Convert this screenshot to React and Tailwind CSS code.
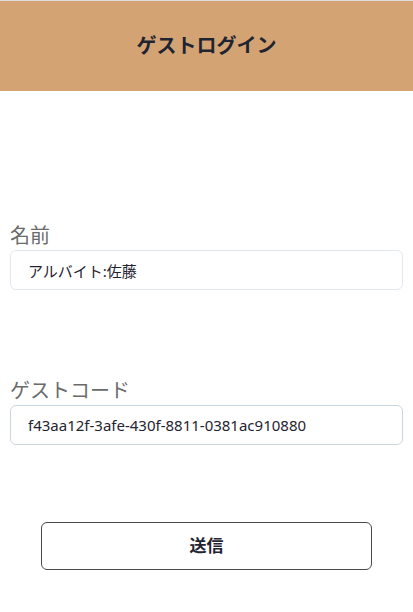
export default function App() {
  const font = { fontFamily: '"Noto Sans", "Noto Sans CJK JP", sans-serif' };
  return (
    <div className="min-h-screen bg-white border-t border-[#dcdcdc]" style={font}>
      <header className="h-[90px] bg-[#d4a373] flex items-center justify-center">
        <h1 className="text-[20px] font-bold text-[#1f2430]">ゲストログイン</h1>
      </header>

      <div className="px-[10px]">
        <div className="mt-[131px]">
          <label className="block text-[20px] leading-[28px] text-[#6b6b6b]">名前</label>
          <input
            defaultValue="アルバイト:佐藤"
            className="w-full h-[40px] rounded-md border border-[#e2e8f0] px-[17px] text-[15px] text-[#1f2430] outline-none"
          />
        </div>

        <div className="mt-[87px]">
          <label className="block text-[20px] leading-[28px] text-[#6b6b6b]">ゲストコード</label>
          <input
            defaultValue="f43aa12f-3afe-430f-8811-0381ac910880"
            className="w-full h-[40px] rounded-md border border-[#cbd5e1] px-[17px] text-[15px] text-[#1f2430] outline-none"
          />
        </div>

        <div className="mt-[77px] px-[31px]">
          <button className="w-full h-[48px] rounded-md border border-[#4a4a4a] bg-white text-[17px] font-bold text-[#1f2430]">
            送信
          </button>
        </div>
      </div>
    </div>
  );
}
